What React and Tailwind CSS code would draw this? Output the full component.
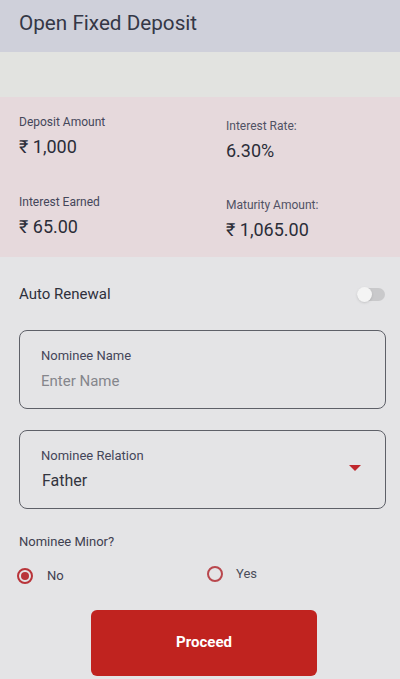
export default function App() {
  return (
    <div className="w-[400px] h-[679px] overflow-hidden bg-[#e4e4e6] font-['Roboto',sans-serif] text-[#2e303c]">
      <div className="h-[52px] bg-[#cfd0da] pl-[19px] pt-[9px]">
        <h1 className="text-[20.7px] leading-[28px] text-[#343746]">Open Fixed Deposit</h1>
      </div>
      <div className="h-[45px] bg-[#e2e3e0]" />
      <div className="h-[160px] bg-[#e6d9dc] px-[19px] pt-[17px]">
        <div className="grid grid-cols-[207px_1fr] gap-y-[32px]">
          <div>
            <p className="text-[12px] leading-[16px] text-[#44465a]">Deposit Amount</p>
            <p className="mt-[6px] text-[18px] leading-[22px] text-[#2b2d38]">₹ 1,000</p>
          </div>
          <div className="pt-[4px]">
            <p className="text-[12px] leading-[16px] text-[#505264]">Interest Rate:</p>
            <p className="mt-[6px] text-[18px] leading-[22px] text-[#2b2d38]">6.30%</p>
          </div>
          <div>
            <p className="text-[12px] leading-[16px] text-[#44465a]">Interest Earned</p>
            <p className="mt-[6px] text-[18px] leading-[22px] text-[#2b2d38]">₹ 65.00</p>
          </div>
          <div className="pt-[3px]">
            <p className="text-[12px] leading-[16px] text-[#505264]">Maturity Amount:</p>
            <p className="mt-[6px] text-[18px] leading-[22px] text-[#2b2d38]">₹ 1,065.00</p>
          </div>
        </div>
      </div>

      <div className="px-[19px]">
        <div className="flex items-center justify-between h-[26px] mt-[24px] -mr-[4px]">
          <span className="text-[15px] text-[#2e303c]">Auto Renewal</span>
          <div className="relative w-[28px] h-[13px] rounded-full bg-[#c9c9cb]">
            <div className="absolute left-0 top-[-1px] w-[15px] h-[15px] rounded-full bg-[#f4f4f4] shadow" />
          </div>
        </div>

        <div className="mt-[23px] w-[367px] h-[79px] rounded-[8px] border border-[#5e6068] px-[21px] pt-[16px]">
          <p className="text-[13px] leading-[18px] text-[#44465a]">Nominee Name</p>
          <p className="mt-[6px] text-[15px] leading-[20px] text-[#85868c]">Enter Name</p>
        </div>

        <div className="mt-[21px] w-[367px] h-[79px] rounded-[8px] border border-[#5e6068] pl-[21px] pr-[24px] pt-[16px] flex justify-between">
          <div>
            <p className="text-[13px] leading-[18px] text-[#44465a]">Nominee Relation</p>
            <p className="mt-[6px] text-[16px] leading-[20px] text-[#33353f] pl-[1px]">Father</p>
          </div>
          <svg width="12" height="7" viewBox="0 0 12 7" className="mt-[18px]">
            <path d="M0 0 L12 0 L6 6 Z" fill="#c0272d" />
          </svg>
        </div>

        <p className="mt-[24px] text-[13px] leading-[18px] text-[#3e4050]">Nominee Minor?</p>

        <div className="mt-[15px] flex items-center">
          <div className="w-[188px] flex items-center">
            <div className="w-[16px] h-[16px] rounded-full border-2 border-[#b9343a] flex items-center justify-center -ml-[2px]">
              <div className="w-[8px] h-[8px] rounded-full bg-[#b9343a]" />
            </div>
            <span className="ml-[14px] text-[13px] text-[#3e4050]">No</span>
          </div>
          <div className="flex items-center -mt-[4px]">
            <div className="w-[16px] h-[16px] rounded-full border-2 border-[#b9474d]" />
            <span className="ml-[13px] text-[13px] text-[#4a4c5a]">Yes</span>
          </div>
        </div>

        <div className="mt-[24px] flex">
          <button className="ml-[72px] w-[226px] h-[66px] rounded-[6px] bg-[#c0231f] text-white text-[15px] font-bold">
            Proceed
          </button>
        </div>
      </div>
    </div>
  );
}
